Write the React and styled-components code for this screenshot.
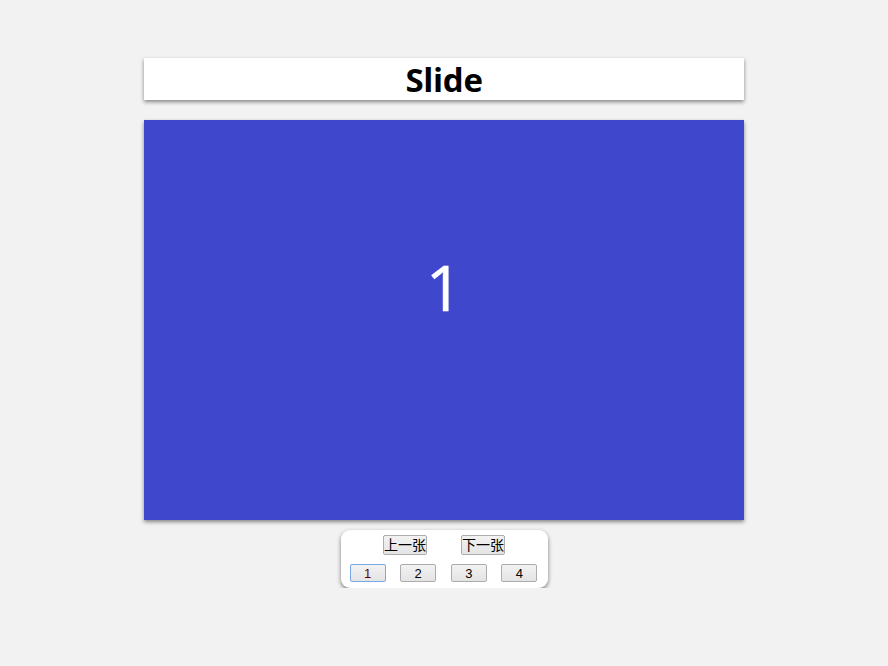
import React, { useState } from "react";
import styled, { createGlobalStyle } from "styled-components";

const Global = createGlobalStyle`
  html, body { margin: 0; padding: 0; background: #f2f2f2; }
  body { font-family: "Open Sans", "Noto Sans", sans-serif; }
`;

const Page = styled.div`
  display: flex;
  flex-direction: column;
  align-items: center;
  padding-top: 58px;
`;

const Header = styled.div`
  width: 600px;
  height: 42px;
  background: #fff;
  box-shadow: 0 2px 4px rgba(0, 0, 0, 0.45);
  display: flex;
  align-items: center;
  justify-content: center;
`;

const Title = styled.h1`
  margin: 0;
  font-family: "Open Sans", "Noto Sans", sans-serif;
  font-size: 33px;
  font-weight: 700;
  color: #000;
  line-height: 1;
  letter-spacing: -0.3px;
`;

const Stage = styled.div`
  margin-top: 20px;
  width: 600px;
  height: 400px;
  background: ${(p) => p.$color};
  box-shadow: 0 2px 4px rgba(0, 0, 0, 0.45);
  display: flex;
  align-items: center;
  justify-content: center;
  color: #fff;
  font-family: "Open Sans", "Noto Sans", sans-serif;
  font-size: 63px;
  font-weight: 400;
  -webkit-text-stroke: 0.6px #fff;
  line-height: 1;
  padding-bottom: 68px;
  box-sizing: border-box;
`;

const Controls = styled.div`
  margin-top: 10px;
  width: 207px;
  box-sizing: border-box;
  padding: 5px 10px 6px 9px;
  background: #fff;
  border-radius: 9px;
  box-shadow: 0 2px 4px rgba(0, 0, 0, 0.5);
  display: flex;
  flex-direction: column;
  gap: 9px;
`;

const Row = styled.div`
  display: flex;
  justify-content: ${(p) => (p.$spread ? "space-between" : "center")};
  gap: ${(p) => (p.$spread ? "0" : "34px")};
  padding-left: ${(p) => (p.$spread ? "0" : "1px")};
`;

const Btn = styled.button`
  box-sizing: border-box;
  width: ${(p) => p.$w}px;
  height: ${(p) => p.$h}px;
  padding: 0;
  margin: 0;
  border: 1px solid ${(p) => (p.$active ? "#7aa7e6" : "#acacac")};
  border-radius: 2px;
  background: linear-gradient(#f2f2f2, #e4e4e4);
  font-family: "Liberation Sans", "Noto Sans CJK SC", sans-serif;
  font-size: ${(p) => p.$fs}px;
  color: ${(p) => (p.$active ? "#600" : "#000")};
  line-height: 1;
  cursor: pointer;
`;

const slides = ["#3f48cc", "#22b14c", "#ed1c24", "#ff7f27"];

export default function App() {
  const [idx, setIdx] = useState(0);
  return (
    <>
      <Global />
      <Page>
        <Header>
          <Title>Slide</Title>
        </Header>
        <Stage $color={slides[idx]}>{idx + 1}</Stage>
        <Controls>
          <Row>
            <Btn $w={44} $h={20} $fs={14} onClick={() => setIdx((idx + 3) % 4)}>上一张</Btn>
            <Btn $w={44} $h={20} $fs={14} onClick={() => setIdx((idx + 1) % 4)}>下一张</Btn>
          </Row>
          <Row $spread>
            {slides.map((c, i) => (
              <Btn key={i} $w={36} $h={18} $fs={13} $active={i === idx} onClick={() => setIdx(i)}>
                {i + 1}
              </Btn>
            ))}
          </Row>
        </Controls>
      </Page>
    </>
  );
}
